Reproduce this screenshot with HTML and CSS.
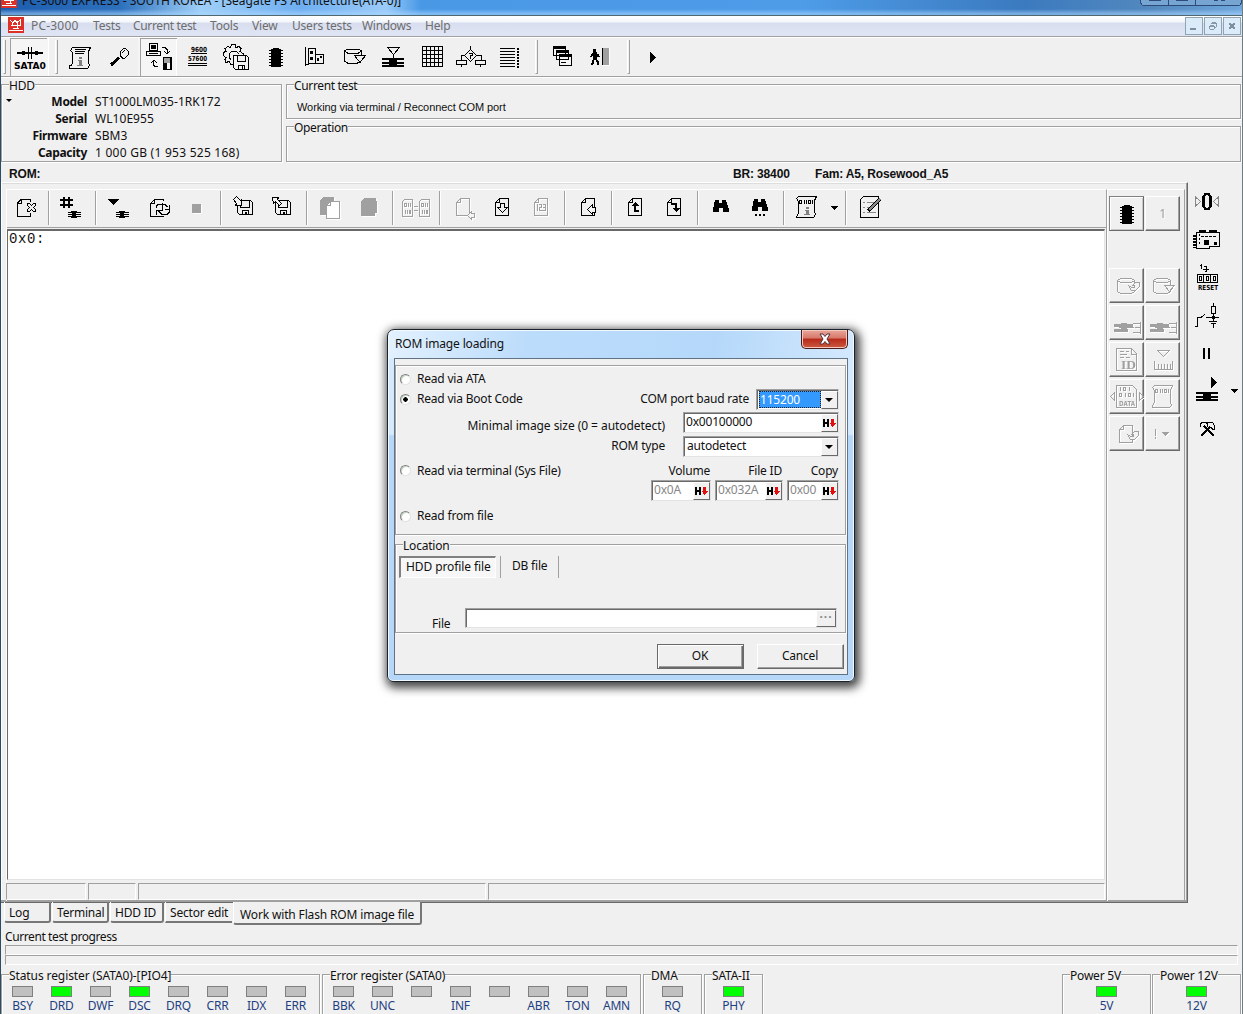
FILE: index.html
```html
<!DOCTYPE html>
<html lang="en">
<head>
    <meta charset="UTF-8">
    <title>PC-3000 EXPRESS</title>
    <link rel="stylesheet" href="styles.css">
</head>
<body>
<svg class="defs">
    <symbol id="page" overflow="visible"><path d="M4.5.5h9v17h-13v-13zM4.5.5v4h-4"/></symbol>
    <symbol id="floppy" overflow="visible"><path d="M.5.5h13l2 2v12h-13l-2-2zM3.5.5v7h9v-7M5.5 14v-4h6v4"/><path d="M9 11.500v3" stroke-width="2"/></symbol>
    <symbol id="chip" overflow="visible"><path class="f" d="M3 1h2V0h6v1h2v18H3z"/><path d="M1 2.500h14M1 5.500h14M1 8.500h14M1 11.500h14M1 14.500h14M1 17.500h14"/></symbol>
    <symbol id="drive" overflow="visible"><path d="M0 2h22M0 5.500h22M0 8.500h22" stroke-width="2"/><path class="f" d="M7 1h8v9H7z"/></symbol>
    <symbol id="cyl" overflow="visible"><path d="M.5 3.500v11l3 2h11l3-2v-11l-3-2h-11zl3 2h11l3-2"/></symbol>
    <symbol id="logo" overflow="visible"><path class="red" d="M0 0h16v16H0z"/><path class="wh" d="M1 13.500h14M5 11.500h6M2 3l3 3 2-3 2 3 4-4M3 8.500h10M9 4v7M12 3v5M4 5v4"/></symbol>
    <symbol id="hex" overflow="visible"><path class="f" d="M0 0h2v3h2V0h2v8H4V5H2v3H0z"/><path class="rd" d="M8 0h3v4h2L9.500 8 6.500 4H8z"/></symbol>
</svg>

<div class="app">
    <div class="titlebar">
        <svg class="logo" viewBox="0 0 16 16"><use href="#logo"/></svg>
        <span class="title">PC-3000 EXPRESS - SOUTH KOREA - [Seagate F3 Architecture(ATA-0)]</span>
        <svg class="winbtns" viewBox="0 0 102 6"><path d="M.5 0v3l2 2.500h97l2-2.500V0M28.500 0v5M55.500 0v5"/><path class="f" d="M9 0h12v1H9zM36 0h12v1H36zM74 0h4v1h-4zM81 0h4v1h-4z"/></svg>
    </div>

    <div class="menubar">
        <svg class="logo" viewBox="0 0 16 16"><use href="#logo"/></svg>
        <span class="m1">PC-3000</span><span class="m2">Tests</span><span class="m3">Current test</span><span class="m4">Tools</span><span class="m5">View</span><span class="m6">Users tests</span><span class="m7">Windows</span><span class="m8">Help</span>
        <div class="mdi">
            <svg viewBox="0 0 18 18"><path d="M5 12h6" stroke-width="2"/></svg>
            <svg viewBox="0 0 18 18"><path d="M5.500 8.500h5v4h-5zM5 9.500h6M7.500 7v-1.500h5v5h-1M8 6.500h5"/></svg>
            <svg viewBox="0 0 18 18"><path d="M6 6l6 6M12 6l-6 6" stroke-width="2"/></svg>
        </div>
    </div>

    <div class="toolbar">
        <div class="grip"></div>
        <svg class="pressed sata" viewBox="10 38 39 38"><path d="M17 53h26" stroke-width="2"/><path class="f" d="M22 51h3v4h-3zM35 51h3v4h-3z"/><path d="M28.500 47v12M31.500 47v12"/><text x="14" y="69" textLength="32" lengthAdjust="spacingAndGlyphs" class="px">SATA0</text></svg>
        <div class="grip g2"></div>
        <svg viewBox="60 38 39 38"><path d="M72.500 47.500h18l-2 4v11l1 3-2 3h-18v-3h2l1-3v-10l-2-2zM75 49.500h11M75 51.500h10M75 53.500h9"/><path class="mf" d="M79 57h3v2h-3zM78 60h4v5h1v1h-6v-1h2v-4h-1z"/></svg>
        <svg viewBox="99 38 39 38"><path d="M120.500 51.500l3-3h2l3 3v3l-4 4h-2l-2-2zM122 53l3-3M120 55l3 3"/><path d="M119 57.500l-8 7.500" stroke-width="3"/></svg>
        <svg class="pressed" viewBox="138 38 39 38"><path d="M149.500 43.500h8v7h-8zM146.500 51.500h14v4h-14zM149 53.500h9"/><path class="f" d="M151 45h5v4h-5z"/><path d="M163.500 57.500h8v12h-8z"/><path class="gf" d="M164 58h7v5h-7z"/><path class="f" d="M163 63h4v6h-4zM170 58h2v11h-2z"/><path d="M162 47.500h3l2 2v4M164 51l3 3 3-3M158 66.500h-3l-2-2v-4M151 63l3-3 3 3"/></svg>
        <svg viewBox="177 38 39 38"><text x="191" y="52" textLength="16" lengthAdjust="spacingAndGlyphs" class="px sm">9600</text><path d="M191 53.500h16M188 63.500h19M188 65.500h19"/><text x="188" y="61" textLength="19" lengthAdjust="spacingAndGlyphs" class="px sm">57600</text></svg>
        <svg viewBox="216 38 39 38"><path d="M233 64.500h-2l-2-3-3 1-1-3 1-2-3-2v-3l3-1-1-3 3-2 2 1 2-3h3l1 3 3-1 2 2-1 3 3 2v2"/><path d="M231 60l-2-3v-3l3-3h4l3 3"/><path class="pg" d="M233.500 55.500h13l2 2v12h-13l-2-2zM237.500 55.500v6h8v-6M238.500 69v-4h6v4M242 66v3"/></svg>
        <svg viewBox="255 38 39 38"><use href="#chip" x="268" y="48"/></svg>
        <svg viewBox="294 38 39 38"><path d="M305.500 47v19M305 64.500h4M308.500 48.500h7v15h-7zM315.500 54.500h8v9h-8z"/><path class="f" d="M310 51h3v3h-3zM310 57h3v3h-3zM317 58h2v3h-2zM320 56h2v2h-2z"/></svg>
        <svg viewBox="333 38 39 38"><path d="M344.500 51v10l3 2h10l2-1M344.500 51l3-2h11l3 2v4M344.500 51l3 2h11l3-2M354.500 55.500h11l-5.500 7z"/></svg>
        <svg viewBox="372 38 39 38"><path d="M387.500 47.500h12l-6 7zM393.500 54v4"/><use href="#drive" x="382" y="57"/></svg>
        <svg viewBox="411 38 39 38"><path d="M422.500 46.500h20v20h-20zM422 50.500h20M422 54.500h20M422 58.500h20M422 62.500h20M426.500 46v20M430.500 46v20M434.500 46v20M438.500 46v20"/></svg>
        <svg viewBox="450 38 39 38"><path d="M470.500 49.500l6 6-6 6-6-6zM470.500 46v3M464 55.500h-3v5M477 55.500h4v5M456.500 60.500h10v4h-10zM475.500 60.500h10v4h-10zM461.500 65v2M480.500 65v2"/><path d="M469 53.500h3v2h-2v2M470.500 58v1"/></svg>
        <svg viewBox="489 38 39 38"><path d="M500 48.500h15M500 51.500h15M500 54.500h15M500 57.500h15M500 60.500h15M500 63.500h15M500 66.500h15"/><path d="M518 48v20" stroke-width="2" stroke-dasharray="2 1"/></svg>
        <div class="grip g3"></div>
        <svg viewBox="543 38 39 38"><path class="pg" d="M553.500 46.500h12v9h-12zM556.500 50.500h12v9h-12zM559.500 54.500h12v11h-12z"/><path d="M553 47.500h12M556 51.500h12M559 55.500h12" stroke-width="2"/><path d="M561 59.500h7M561 62.500h5"/></svg>
        <svg viewBox="582 38 39 38"><path class="gf" d="M602 48h7v17h-7z"/><path d="M602.500 48v17" stroke-width="1"/><path d="M609.500 48v17.500h-7" class="wh"/><path class="f" d="M593 49h3v3h-3zM593 52h4v7h-4z"/><path d="M593 53l-2 4M597 54l2 3M595 58l3 4v3M594 58l-1 5-2 2" stroke-width="2"/></svg>
        <div class="grip g4"></div>
        <svg viewBox="633 38 39 38"><path class="f" d="M650 52v11l6-5.500z"/></svg>
    </div>

    <div class="info">
        <div class="group hdd">
            <span class="legend">HDD</span>
            <i class="tri"></i>
            <dl>
                <dt>Model</dt><dd>ST1000LM035-1RK172</dd>
                <dt>Serial</dt><dd>WL10E955</dd>
                <dt>Firmware</dt><dd>SBM3</dd>
                <dt>Capacity</dt><dd class="cap">1 000 GB (1 953 525 168)</dd>
            </dl>
        </div>
        <div class="tests">
            <div class="group cur"><span class="legend">Current test</span><p>Working via terminal / Reconnect COM port</p></div>
            <div class="group oper"><span class="legend">Operation</span></div>
        </div>
    </div>

    <div class="romline"><b>ROM:</b><b class="br">BR: 38400</b><b class="fam">Fam: A5, Rosewood_A5</b></div>

    <div class="main">
        <div class="frame">
            <div class="left">
                <div class="tools">
                    <div class="set first"><svg viewBox="9 189 39 38"><path d="M30.500 202v-2.500h-9v0h-.5l-3.500 3.500v13.500h13v-3.500M21.500 199.500v4h-4"/><path d="M27.500 203.500h2l2 2 2-2h2v2l-2 2 2 2v2h-2l-2-2-2 2h-2v-2l2-2-2-2z"/></svg></div>
                    <div class="set"><svg viewBox="52 189 39 38"><path d="M60 200h13M60 205h13M64 197v11M69 197v11" stroke-width="2"/><path d="M68 212.500h13M68 214.500h13M68 216.500h13M71 211.500h6M71 217.500h6"/><path class="f" d="M72 211h4v7h-4z"/></svg></div>
                    <div class="set"><svg viewBox="99 189 39 38"><path class="f" d="M108 199h11l-5.500 6z"/><path d="M116 212.500h13M116 214.500h13M116 216.500h13M119 211.500h6M119 217.500h6"/><path class="f" d="M120 211h4v7h-4z"/></svg><svg viewBox="138 189 39 38"><path d="M163.500 201v-1.500h-9l-4 4v13h13v-1M154.500 199.500v4h-4"/><path d="M156.500 208v-2l2-2h6l3 3M169.500 205v4h-5M169.500 210v2l-2 2h-6l-3-3M156.500 214.500v-4h5M162.500 203v8"/></svg><svg viewBox="177 189 39 38"><path class="wf" d="M193 205h9v9h-9z"/><path class="gf" d="M192 204h9v9h-9z"/></svg></div>
                    <div class="set"><svg viewBox="224 189 39 38"><use href="#floppy" x="237" y="200"/><path class="pg" d="M233.500 199.500l3-3 4 4 1-1v6h-6l1-2z"/></svg><svg viewBox="263 189 39 38"><use href="#floppy" x="275" y="200"/><path class="pg" d="M272.500 197.500h6l-1 2 4 4-2 2-4-4-2 2z"/></svg></div>
                    <div class="set off"><svg viewBox="310 189 39 38"><path class="gf" d="M323 197h11v18h-14v-15z"/><g class="pgbg"><use href="#page" x="326" y="201"/></g></svg><svg viewBox="349 189 39 38"><path class="gf" d="M364 198h12v3l1 1v11h-2v3h-14v-15z"/></svg></div>
                    <div class="set off"><svg viewBox="396 189 39 38"><path d="M404.500 199.500h8v17h-10v-15zM421.500 199.500h8v17h-10v-15zM414 206.500h4M414 210.500h4M404.500 203.500h2v3h-2zM408.500 203v4M410.500 203v4M405.500 210v4M407.500 210v4M409.500 210.500h1v3h-1zM421.500 203.500h2v3h-2zM425.500 203v4M427.500 203v4M422.500 210v4M424.500 210v4M426.500 210.500h1v3h-1z"/></svg></div>
                    <div class="set"><svg class="off" viewBox="443 189 39 38"><use href="#page" x="456" y="198"/><path class="pg" d="M467.500 215.500l4-4v2h3v4h-3v2z"/></svg><svg viewBox="482 189 39 38"><use href="#page" x="495" y="198"/><path d="M500.500 203.500h4v4h3l-5 5-5-5h3z"/></svg><svg class="off" viewBox="521 189 39 38"><use href="#page" x="534" y="198"/><path d="M537.500 204v7M539 204.500h2.500v3h-2v3h3M543 204.500h2.500v6h-3M543 207.500h2"/></svg></div>
                    <div class="set"><svg viewBox="568 189 39 38"><use href="#page" x="581" y="198"/><path class="pg" d="M587.500 209.500l5-5v3h3v5h-3v2z"/></svg></div>
                    <div class="set"><svg viewBox="615 189 39 38"><use href="#page" x="628" y="198"/><path d="M635 204v7h4" stroke-width="2"/><path class="f" d="M631 206l4-4 4 4z"/></svg><svg viewBox="654 189 39 38"><use href="#page" x="667" y="198"/><path d="M671 204h5v5" stroke-width="2"/><path class="f" d="M672 208h8l-4 4z"/></svg></div>
                    <div class="set"><svg viewBox="701 189 39 38"><path class="f" d="M715 200h4v3h3v-3h4l3 9v3h-6v-4h-4v4h-6v-3z"/></svg><svg viewBox="740 189 39 38"><path class="f" d="M754 199h4v3h3v-3h4l3 9v3h-6v-4h-4v4h-6v-3zM755 214h2v2h-2zM759 214h2v2h-2zM763 214h2v2h-2z"/></svg></div>
                    <div class="set"><svg viewBox="787 189 39 38"><path d="M798.500 196.500h18l-2 4v11l1 3-2 3h-17v-1l2-3v-12l-2-3zM799.500 200.500h2v3h-2zM804.500 200v4M806.500 200v4M808.500 200.500h2v3h-2zM812.500 200v4"/><path class="mf" d="M806 207h3v2h-3zM805 210h4v4h1v1h-6v-1h2v-3h-1z"/></svg><svg class="drop" viewBox="826 189 15 38"><path class="f" d="M830 206h8l-4 4z"/></svg></div>
                    <div class="set"><svg viewBox="849 189 39 38"><path d="M863.500 196.500h15v21h-18v-18z"/><path class="gy" d="M863 202.500h2M863 207.500h2M863 212.500h2M867 202.500h7M867 207.500h5M867 212.500h9"/><path d="M868 211l12-12" stroke-width="4"/><path class="gy" d="M869 210l11-11" stroke-width="2"/></svg></div>
                </div>
                <div class="editor">0x0:</div>
                <div class="statusbar"><div class="s1"></div><div class="s2"></div><div class="s3"></div><div class="s4"></div></div>
            </div>
            <div class="panel">
                <div class="btn down"><svg viewBox="0 0 36 35"><use href="#chip" x="10" y="9"/></svg></div>
                <div class="btn off one">1</div>
                <div class="space"></div>
                <div class="btn off"><svg viewBox="0 0 36 35"><use href="#cyl" x="8" y="9"/><path class="pg" d="M19.500 17.500l3 2h3v-2h-2l3-3h4v4l-4 4h-4z"/></svg></div>
                <div class="btn off"><svg viewBox="0 0 36 35"><use href="#cyl" x="8" y="9"/><path class="pg" d="M19.500 17.500h10l-5 6z"/></svg></div>
                <div class="btn off"><svg viewBox="0 0 36 35"><path d="M5 20h19M5 25h14" stroke-width="3"/><path d="M10 22.500h15M24 18.500h7M26 22.500h5M24 27.500h7M31 17v12"/><path class="f" d="M12 18h6v9h-6z"/></svg></div>
                <div class="btn off"><svg viewBox="0 0 36 35"><path d="M5 20h19M5 25h14" stroke-width="3"/><path d="M10 22.500h15M24 18.500h7M26 22.500h5M24 27.500h7M31 17v12"/><path class="f" d="M12 18h6v9h-6z"/></svg></div>
                <div class="btn off"><svg viewBox="0 0 36 35"><path d="M7.500 6.500h15l5 5v17h-20zM22.500 7v5h5M11 9.500h4M17 9.500h3M11 12.500h7M11 15.500h4M17 15.500h4"/><text x="12" y="27" textLength="15" lengthAdjust="spacingAndGlyphs" class="idtext">ID</text></svg></div>
                <div class="btn off"><svg viewBox="0 0 36 35"><path d="M12.500 8.500h12l-6 6zM9.500 19v8h18v-8M13.500 22v5M16.500 22v5M19.500 22v5M22.500 22v5M25.500 22v5"/></svg></div>
                <div class="btn off"><svg viewBox="0 0 36 35"><path d="M7.500 6.500h16l4 4v18h-20zM5.500 13.500l-4 4 4 4zM30.500 13.500l4 4-4 4zM11.500 8v4M14.500 8.500h2v3h-2zM20.500 8v4M10.500 14.500h2v3h-2zM16.500 14v4M19.500 14.500h2v3h-2zM24.500 14v4"/><text x="10" y="27" textLength="16" lengthAdjust="spacingAndGlyphs" class="px sm">DATA</text></svg></div>
                <div class="btn off"><svg viewBox="0 0 36 35"><path d="M9.500 6.500h18l-2 5v11l1 4-2 2h-17v-2l2-3v-12l-2-3zM10.500 10.500h2v3h-2zM15.500 10v4M17.500 10v4M19.500 10.500h2v3h-2zM23.500 10v4"/></svg></div>
                <div class="btn off"><svg viewBox="0 0 36 35"><use href="#page" x="10" y="9"/><path class="pg" d="M18.500 18.500l3 2h3v-2h-2l3-3h4v4l-4 4h-4z"/></svg></div>
                <div class="btn off"><svg viewBox="0 0 36 35"><path d="M10.500 13v7M10.500 21v2"/><path class="f" d="M16 16h8l-4 4z"/></svg></div>
            </div>
        </div>
        <div class="side">
            <svg viewBox="1188 182 52 38"><path d="M1205.500 194h3l2 3v9l-2 3h-3l-2-3v-9z" stroke-width="2.500"/><path class="gy" d="M1195.500 197v9l5-4.500zM1218.500 197v9l-5-4.500z"/></svg>
            <svg viewBox="1188 220 52 38"><path d="M1196.500 232.500h23v14h-10v2h-13z"/><path d="M1199 231h7M1209 231h8" stroke-width="2"/><path d="M1194 235v13" stroke-width="3" stroke-dasharray="2 1"/><path d="M1201 236.500h15" stroke-dasharray="3 1"/><path d="M1199.500 234v12" stroke-dasharray="2 2"/><path class="f" d="M1204 240h5v5h-5zM1214 242h3v3h-3z"/></svg>
            <svg viewBox="1188 258 52 38"><path d="M1201.500 264v5M1200 265.500h1M1204 266.500h2v5M1203 269.500h6M1205 271.500h2M1197.500 274.500h20M1197.500 282.500h20M1197.500 274v9M1203.500 274v9M1210.500 274v9M1217.500 274v9M1199.500 276.500h2v4h-2zM1206.500 276.500h2v4h-2zM1213.500 276.500h2v4h-2z"/><text x="1198" y="290" textLength="20" lengthAdjust="spacingAndGlyphs" class="px sm">RESET</text></svg>
            <svg viewBox="1188 296 52 38"><path d="M1195 326.500h2.500v-9h4M1201 317.500l4-3M1206 317.500h13M1211.500 306.500h4v7h-4zM1213.500 303v4M1213.500 314v7M1209 321.500h8M1211 323.500h5M1213.500 324v4"/><path class="f" d="M1212 316h3v3h-3z"/></svg>
            <svg viewBox="1188 334 52 38"><path d="M1204 348v11M1209 348v11" stroke-width="2"/></svg>
            <svg viewBox="1188 372 52 38"><path class="f" d="M1211 377v11l6-5.500zM1230 389h8l-4 4z"/><use href="#drive" x="1196" y="391"/></svg>
            <svg viewBox="1188 410 52 38"><path d="M1201 436l9-9M1204 426l10 10" stroke-width="2"/><path d="M1200.500 427v-3l2-2h3l2 2v3M1206.500 423.500l2-1h4l2 3v4h-2l-1-2"/></svg>
        </div>
    </div>

    <div class="tabs"><span class="t1">Log</span><span class="t2">Terminal</span><span class="t3">HDD ID</span><span class="t4">Sector edit</span><span class="t5 active">Work with Flash ROM image file</span></div>

    <div class="progress"><span>Current test progress</span><div class="bar"></div><div class="bar"></div></div>

    <div class="registers">
        <div class="group r1"><span class="legend">Status register (SATA0)-[PIO4]</span>
            <div class="leds"><span><i></i>BSY</span><span><i class="on"></i>DRD</span><span><i></i>DWF</span><span><i class="on"></i>DSC</span><span><i></i>DRQ</span><span><i></i>CRR</span><span><i></i>IDX</span><span><i></i>ERR</span></div></div>
        <div class="group r2"><span class="legend">Error register (SATA0)</span>
            <div class="leds"><span><i></i>BBK</span><span><i></i>UNC</span><span><i></i></span><span><i></i>INF</span><span><i></i></span><span><i></i>ABR</span><span><i></i>TON</span><span><i></i>AMN</span></div></div>
        <div class="group r3"><span class="legend">DMA</span><div class="leds"><span><i></i>RQ</span></div></div>
        <div class="group r4"><span class="legend">SATA-II</span><div class="leds"><span><i class="on"></i>PHY</span></div></div>
        <div class="group r5"><span class="legend">Power 5V</span><div class="leds"><span><i class="on"></i>5V</span></div></div>
        <div class="group r6"><span class="legend">Power 12V</span><div class="leds"><span><i class="on"></i>12V</span></div></div>
    </div>
</div>

<div class="dialog">
    <div class="caption"><span>ROM image loading</span><div class="close"><svg viewBox="0 0 14 12"><path d="M2 1h3l2 2.500L9 1h3L9 6l3 5H9L7 8.500 5 11H2l3-5z"/></svg></div></div>
    <div class="client">
        <div class="group source">
            <div class="row ata"><i class="radio"></i><span>Read via ATA</span></div>
            <div class="row boot"><i class="radio checked"></i><span>Read via Boot Code</span><label>COM port baud rate</label><div class="field baud"><b>115200</b><i class="arrow"></i></div></div>
            <div class="row size"><label>Minimal image size (0 = autodetect)</label><div class="field wide">0x00100000<i class="hex"><svg viewBox="0 0 13 8"><use href="#hex"/></svg></i></div></div>
            <div class="row type"><label>ROM type</label><div class="field wide auto">autodetect<i class="arrow"></i></div></div>
            <div class="row term"><i class="radio"></i><span>Read via terminal (Sys File)</span><label class="vol">Volume</label><label class="fid">File ID</label><label class="cop">Copy</label></div>
            <div class="row ids"><div class="field f1">0x0A<i class="hex"><svg viewBox="0 0 13 8"><use href="#hex"/></svg></i></div><div class="field f2">0x032A<i class="hex"><svg viewBox="0 0 13 8"><use href="#hex"/></svg></i></div><div class="field f3">0x00<i class="hex"><svg viewBox="0 0 13 8"><use href="#hex"/></svg></i></div></div>
            <div class="row file"><i class="radio"></i><span>Read from file</span></div>
        </div>
        <div class="group location">
            <span class="legend">Location</span>
            <div class="loctabs"><span class="sel">HDD profile file</span><span class="db">DB file</span></div>
            <div class="path"><label>File</label><div class="field"><i class="dots">···</i></div></div>
        </div>
        <div class="buttons"><button class="ok">OK</button><button>Cancel</button></div>
    </div>
</div>
</body>
</html>
```

FILE: styles.css
```css
* {
    box-sizing: border-box;
}
body {
    margin: 0;
    width: 1243px;
    height: 1014px;
    overflow: hidden;
    background: #f0f0f0;
    color: #111;
    font: 12px/16px "Noto Sans", "Noto Sans CJK KR", sans-serif;
    letter-spacing: -0.2px;
    white-space: nowrap;
}
i {
    font-style: normal;
}
.defs {
    display: none;
}
svg {
    display: block;
    flex: none;
    color: #000;
    fill: none;
    stroke: currentColor;
    shape-rendering: crispEdges;
}
.f { fill: currentColor; stroke: none; }
.gf { fill: #a0a0a0; stroke: none; }
.mf { fill: #808080; stroke: none; }
.wf { fill: #fff; stroke: none; }
.gy { stroke: #888; }
.pg { fill: #f4f4f4; }
.pgbg { fill: #fff; }
.red { fill: #dc3029; stroke: none; }
.rd { fill: #e01010; stroke: none; }
.wh { stroke: #fff; }
.off, .off svg, svg.off {
    color: #a0a0a0;
}
.off svg, svg.off {
    filter: drop-shadow(1px 1px 0 #fff);
}
text {
    fill: currentColor;
    stroke: none;
    letter-spacing: 0;
}
.px {
    font: bold 9px "DejaVu Sans", sans-serif;
}
.px.sm {
    font-size: 7px;
}
.idtext {
    font: bold 12px "Liberation Serif", serif;
}

.app {
    height: 1014px;
    display: flex;
    flex-direction: column;
    border-left: 1px solid #2b4b66;
    border-right: 1px solid #6d7d82;
}
.titlebar {
    flex: none;
    height: 16px;
    display: flex;
    overflow: hidden;
    background: linear-gradient(#0000 60%, #a9d6ff88 90%), linear-gradient(90deg, #1d5cae 0, #2d71bd 120px, #9fcff8 200px, #6eaef0 300px, #9bcbf8 385px, #4998e6 420px, #4e9ce8 800px, #3b7abf 1020px, #5288be 1150px, #6fa6db 1242px);
    border-bottom: 1px solid #50686f;
}
.logo {
    width: 16px;
    height: 16px;
}
.titlebar .logo {
    margin-top: -8px;
}
.title {
    margin: -7px 0 0 5px;
    width: 381px;
    letter-spacing: 0;
}
.winbtns {
    width: 102px;
    height: 6px;
    margin-left: auto;
    color: #2c4c77;
    background: #77a5d3;
    border-radius: 0 0 4px 4px;
}
.menubar {
    flex: none;
    height: 21px;
    padding-left: 7px;
    display: flex;
    align-items: center;
    color: #6d6d6d;
    background: linear-gradient(#fff 0, #f3f6fb 6px, #d8deef 7px, #dfe4f4 18px);
    border-bottom: 1px solid #a0a0a0;
}
.menubar .logo {
    margin-top: -2px;
}
.m1 { margin-left: 7px; width: 62px; letter-spacing: 0.2px; }
.m2 { width: 40px; }
.m3 { width: 77px; letter-spacing: -0.35px; }
.m4 { width: 42px; }
.m5 { width: 40px; }
.m6 { width: 70px; }
.m7 { width: 63px; letter-spacing: -0.3px; }
.mdi {
    margin: 0 1px 0 auto;
    display: flex;
    gap: 1px;
}
.mdi svg {
    width: 18px;
    height: 18px;
    color: #7d8fa0;
    border: 1px solid #8fa3b3;
    background: #dcebf8;
}

.toolbar {
    flex: none;
    height: 40px;
    display: flex;
    border-top: 1px solid #fff;
    border-bottom: 1px solid #a0a0a0;
    box-shadow: 0 1px #fff;
}
.toolbar svg {
    width: 39px;
    height: 38px;
}
.grip {
    width: 3px;
    height: 34px;
    margin: 2px 4px 0 2px;
    border-right: 1px solid #a0a0a0;
    border-bottom: 1px solid #a0a0a0;
    border-left: 1px solid #fff;
}
.g2 { margin: 2px 2px 0 6px; }
.g3 { margin: 2px 5px 0 7px; }
.g4 { margin: 2px 3px 0 6px; }
.pressed {
    background: linear-gradient(#a0a0a0, #a0a0a0) 2px 0 / 37px 1px no-repeat, linear-gradient(#a0a0a0, #a0a0a0) 2px 0 / 1px 38px no-repeat, linear-gradient(#fff, #fff) 38px 0 / 1px 38px no-repeat, #f5f5f5;
}
.sata {
    background-position: 0 0, 0 0, 38px 0;
}

.group {
    border: 1px solid #a0a0a0;
    box-shadow: 1px 1px #fff, inset 1px 1px #fff;
}
.legend {
    display: block;
    width: fit-content;
    height: 16px;
    margin: -7px 0 -1px 7px;
    background: #f0f0f0;
}
.info {
    flex: none;
    display: flex;
    gap: 4px;
    height: 85px;
    padding-top: 7px;
}
.hdd {
    width: 281px;
    height: 78px;
    display: grid;
    grid-template-columns: 10px 1fr;
    grid-template-rows: 8px 1fr;
}
.hdd .legend {
    grid-column: 1 / 3;
}
.tri {
    margin: 6px 0 0 4px;
    width: 0;
    height: 0;
    border: 3px solid transparent;
    border-top-color: #000;
}
.hdd dl {
    margin: 0;
    display: grid;
    grid-template-columns: 75px 1fr;
    column-gap: 8px;
    line-height: 17px;
    align-content: start;
}
.hdd dt {
    text-align: right;
    font-weight: bold;
    letter-spacing: -0.3px;
}
.hdd dd {
    margin: 0;
    letter-spacing: 0.050px;
}
.hdd .cap {
    letter-spacing: 0.250px;
}
.tests {
    flex: 1;
    margin-right: 1px;
    display: flex;
    flex-direction: column;
    gap: 7px;
    letter-spacing: -0.35px;
}
.cur {
    height: 35px;
}
.oper {
    height: 36px;
}
.cur p {
    margin: 6px 0 0 10px;
    font: 11px/16px "Liberation Sans", sans-serif;
    letter-spacing: -0.080px;
}
.romline {
    flex: none;
    height: 20px;
    padding: 4px 0 0 8px;
    display: flex;
    font: bold 12px/16px "Liberation Sans", sans-serif;
    letter-spacing: -0.150px;
}
.br { margin-left: auto; width: 82px; }
.fam { width: 427px; }

.main {
    flex: none;
    display: flex;
    height: 721px;
}
.frame {
    width: 1187px;
    display: flex;
    padding: 6px 2px 0 5px;
    border-top: 1px solid #fff;
    border-right: 1px solid #696969;
    border-bottom: 1px solid #696969;
    box-shadow: inset -1px -2px #a0a0a0, inset 1px 0 #fff, inset 0 1px #dcdcdc;
}
.left {
    width: 1101px;
    height: 712px;
    border-top: 1px solid #fff;
    border-left: 1px solid #fff;
    border-right: 1px solid #a0a0a0;
    display: flex;
    flex-direction: column;
}
.tools {
    flex: none;
    display: flex;
    height: 38px;
    border-bottom: 1px solid #a0a0a0;
}
.tools svg {
    width: 39px;
    height: 38px;
}
.tools .drop {
    width: 15px;
}
.set {
    display: flex;
    height: 34px;
    margin-top: 1px;
    padding: 0 4px 0 3px;
    border-left: 1px solid #a0a0a0;
    box-shadow: inset 1px 0 #fff;
}
.set svg {
    margin-top: -2px;
}
.set.first {
    border: 0;
    box-shadow: none;
    padding: 0 0 0 2px;
}
.editor {
    flex: 1;
    margin: 1px 1px 1px 0;
    padding: 0 0 0 1px;
    background: #fff;
    border: 1px solid #e3e3e3;
    border-top: 2px solid #696969;
    border-left: 1px solid #696969;
    font: 14px/17px "Liberation Mono", monospace;
    letter-spacing: 0.600px;
}
.statusbar {
    flex: none;
    display: flex;
    gap: 2px;
    height: 20px;
    margin-left: -1px;
    padding: 2px 1px 0 0;
}
.statusbar div {
    height: 17px;
    border: 1px solid #fff;
    border-top-color: #a0a0a0;
    border-left-color: #a0a0a0;
}
.s1 { width: 80px; }
.s2 { width: 48px; }
.s3 { width: 348px; }
.s4 { flex: 1; }
.panel {
    width: 78px;
    height: 712px;
    padding: 6px 0 0 1px;
    display: grid;
    grid-template-columns: 36px 36px;
    grid-template-rows: 35px 33px repeat(5, 35px);
    align-content: start;
    row-gap: 2px;
    border-top: 1px solid #fff;
    border-left: 1px solid #fff;
    border-right: 1px solid #a0a0a0;
}
.space {
    grid-column: 1 / 3;
}
.btn {
    width: 35px;
    height: 35px;
    border: 1px solid #fff;
    border-right: 1px solid #696969;
    border-bottom: 1px solid #696969;
    box-shadow: inset -1px -1px #a0a0a0;
}
.btn svg {
    width: 36px;
    height: 35px;
    margin: -1px 0 0 -1px;
}
.btn.down {
    border-color: #808080 #696969 #696969 #808080;
    box-shadow: inset 1px 1px #fff, inset -1px -1px #c8c8c8;
}
.one {
    text-align: center;
    line-height: 34px;
    text-shadow: 1px 1px #fff;
}
.side svg {
    width: 52px;
    height: 38px;
}

.tabs {
    flex: none;
    display: flex;
    height: 26px;
    margin-top: -1px;
    padding-left: 3px;
    gap: 1px;
}
.tabs span {
    height: 21px;
    padding: 3px 0 0 4px;
    border-right: 2px solid #777;
    border-bottom: 2px solid #777;
    border-left: 1px solid #fff;
    border-radius: 0 0 3px 3px;
}
.tabs .t1 { width: 47px; }
.t2 { width: 57px; }
.t3 { width: 54px; }
.tabs .t4 { width: 67px; border-right: 0; border-radius: 0; }
.tabs .active {
    width: 189px;
    height: 23px;
    padding: 5px 0 0 6px;
    background: #f0f0f0;
    letter-spacing: -0.150px;
}
.progress {
    flex: none;
    height: 46px;
    padding: 1px 4px 0;
}
.progress span {
    display: block;
    height: 16px;
    letter-spacing: -0.4px;
}
.bar {
    height: 10px;
    border: 1px solid #fff;
    border-top-color: #a0a0a0;
    border-left-color: #a0a0a0;
}
.registers {
    display: flex;
    flex: none;
    height: 50px;
}
.registers .group {
    height: 50px;
    flex: none;
    margin-right: 2px;
}
.r1, .r2 { width: 319px; }
.r1 .legend { letter-spacing: -0.1px; }
.r3, .r4 { width: 59px; }
.registers .r5, .registers .r6 { width: 89px; margin-right: 1px; }
.registers .r5 { margin-left: auto; }
.leds {
    display: flex;
    margin: 3px 0 0 2px;
    color: #1f4080;
}
.leds span {
    width: 39px;
    padding-right: 2px;
    text-align: center;
}
.r3 .leds, .r4 .leds { margin-left: 10px; }
.r5 .leds, .r6 .leds { margin-left: 25px; }
.leds i {
    display: block;
    width: 21px;
    height: 11px;
    margin: 0 auto 1px 8px;
    background: #c0c0c0;
    border: 1px solid #808080;
}
.leds .on {
    background: #0f0;
}

.dialog {
    position: absolute;
    left: 387px;
    top: 329px;
    width: 468px;
    height: 353px;
    padding: 0 6px;
    border: 1px solid #1a222b;
    border-radius: 7px 7px 6px 6px;
    background: linear-gradient(100deg, #e3f1ff 0, #bcdcfb 30%, #b5d8fa 70%, #d3e8fd 100%) 0 0 / 100% 29px no-repeat, linear-gradient(#d3e9fe 0, #d6eafe 104px, #b6d7f8 106px);
    box-shadow: inset 0 0 0 1px #f2faff, 2px 3px 10px 3px #000b;
}
.caption {
    height: 28px;
    display: flex;
    justify-content: space-between;
}
.caption span {
    margin: 6px 0 0 1px;
    letter-spacing: -0.15px;
}
.close {
    width: 47px;
    height: 19px;
    padding: 3px 0 0 16px;
    border: 1px solid #4a1c1c;
    border-top: 0;
    border-radius: 0 0 5px 5px;
    background: linear-gradient(#e9a79b 0, #d6786a 45%, #b7291a 50%, #cc5b40 100%);
    box-shadow: inset 0 0 0 1px #f5c8c0;
}
.close svg {
    width: 14px;
    height: 12px;
    fill: #fff;
    stroke: #53323a;
    shape-rendering: auto;
}
.client {
    width: 454px;
    height: 317px;
    padding-top: 6px;
    background: #f0f0f0;
    border: 1px solid #5f7384;
}
.source {
    width: 451px;
    height: 170px;
}
.row {
    display: flex;
    align-items: center;
    height: 20px;
    padding: 0 6px 0 4px;
}
.row label {
    margin-left: auto;
}
.ata { margin-top: 3px; }
.radio {
    width: 11px;
    height: 11px;
    margin-right: 6px;
    border: 1px solid;
    border-color: #808080 #e3e3e3 #e3e3e3 #808080;
    border-radius: 50%;
    background: #fff;
    box-shadow: inset 1px 1px #6966;
}
.checked {
    background: radial-gradient(circle, #000 2px, #fff 2.500px);
}
.field {
    display: flex;
    flex: none;
    height: 21px;
    line-height: 17px;
    padding-left: 2px;
    background: #fff;
    border: 1px solid #e3e3e3;
    border-top-color: #a0a0a0;
    border-left-color: #a0a0a0;
    box-shadow: inset 1px 1px #696969;
}
.baud {
    width: 83px;
    margin-left: 7px;
}
.baud b {
    width: 62px;
    height: 17px;
    margin: 1px 0 0 0;
    line-height: 15px;
    font-weight: normal;
    color: #fff;
    background: #3399ff;
    border: 1px dotted #222;
}
.baud, .baud .arrow { margin-bottom: 0; }
.arrow, .hex, .dots {
    flex: none;
    width: 17px;
    height: 18px;
    margin: 1px 0 0 auto;
    background: #f0f0f0;
    border: 1px solid #fff;
    border-right-color: #696969;
    border-bottom-color: #696969;
}
.arrow::before {
    content: "";
    display: block;
    width: 0;
    margin: 6px 0 0 3px;
    border: 4px solid transparent;
    border-top-color: #000;
}
.hex svg {
    width: 13px;
    height: 8px;
    margin: 4px 0 0 1px;
}
.wide {
    width: 156px;
}
.size, .type {
    height: 24px;
}
.size { margin-top: 1px; }
.size label { margin-right: 18px; padding-top: 8px; letter-spacing: -0.060px; }
.size .hex { margin-right: 0; }
.type label { margin-right: 18px; }
.auto { padding-left: 3px; }
.term { margin-top: 1px; height: 23px; }
.term .vol { width: 43px; text-align: right; }
.term .fid { width: 72px; margin: 0; text-align: right; }
.term .cop { width: 56px; margin: 0 1px 0 0; text-align: right; }
.ids {
    justify-content: flex-end;
    gap: 4px;
    height: 21px;
    margin-top: -2px;
    color: #888;
}
.f1 { width: 60px; }
.f2 { width: 68px; }
.f3 { width: 52px; }
.file { margin-top: 5px; }
.location {
    width: 451px;
    height: 89px;
    margin-top: 9px;
}
.loctabs {
    display: flex;
    height: 22px;
    margin: 3px 0 0 3px;
}
.sel {
    width: 97px;
    padding: 1px 0 0 5px;
    border: 1px solid #fff;
    border-top: 2px solid #808080;
    border-left: 2px solid #808080;
    background: #f7f7f7;
    letter-spacing: -0.1px;
}
.db {
    width: 59px;
    margin-left: 4px;
    padding: 2px 0 0 11px;
    border: 1px solid #a0a0a0;
    border-width: 0 1px;
}
.path {
    display: flex;
    margin: 30px 0 0 36px;
}
.path label {
    width: 33px;
    padding-top: 8px;
}
.path .field {
    width: 372px;
    height: 20px;
}
.dots {
    width: 20px;
    height: 17px;
    line-height: 11px;
    text-align: center;
    font-weight: bold;
    color: #888;
    letter-spacing: 1px;
}
.buttons {
    display: flex;
    gap: 13px;
    margin: 11px 0 0 262px;
}
button {
    width: 87px;
    height: 25px;
    padding: 0 1px 2px 0;
    font: inherit;
    letter-spacing: inherit;
    color: #111;
    background: #f0f0f0;
    border: 1px solid #fff;
    border-right-color: #696969;
    border-bottom-color: #696969;
    box-shadow: inset -1px -1px #a0a0a0;
}
.ok {
    border-color: #696969;
    box-shadow: inset 1px 1px #fff, inset -1px -1px #696969, inset -2px -2px #a0a0a0;
}
```
